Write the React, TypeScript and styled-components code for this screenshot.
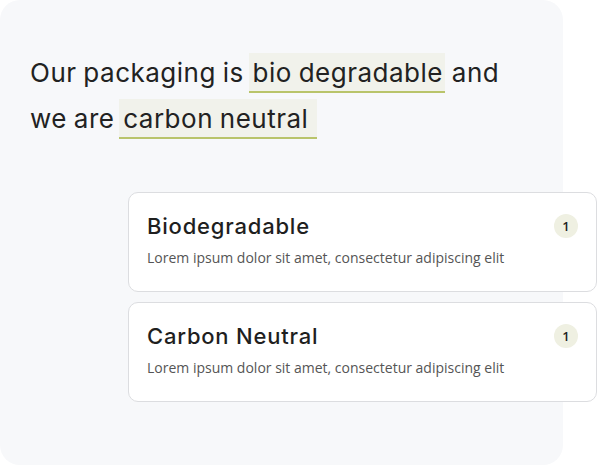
import styled, { createGlobalStyle } from "styled-components";

const Global = createGlobalStyle`
  body {
    margin: 0;
    background: #ffffff;
  }
`

const Panel = styled.div`
  width: 563px;
  height: 465px;
  box-sizing: border-box;
  background: #f7f8fa;
  border-radius: 20px;
  padding: 50px 0 0 30px;
`

const Headline = styled.p`
  margin: 0;
  font-family: "Inter", sans-serif;
  font-size: 26px;
  letter-spacing: 0.5px;
  word-spacing: -1px;
  line-height: 46px;
  color: #222222;
`

const Mark = styled.span`
  background: #f1f2eb;
  border-bottom: 2px solid #b9c46a;
  margin-left: -2px;
  padding: 4px 2px 3px 4px;
`

const Cards = styled.div`
  display: flex;
  flex-direction: column;
  gap: 10px;
  width: 469px;
  margin: 50px 0 0 98px;
`

const Card = styled.div`
  display: flex;
  align-items: flex-start;
  justify-content: space-between;
  background: #ffffff;
  border: 1px solid #dcdde0;
  border-radius: 10px;
  padding: 18px 18px 23px 18px;
`

const Title = styled.h3`
  margin: 0 0 7px;
  font-family: "Inter", sans-serif;
  font-weight: 500;
  font-size: 22px;
  letter-spacing: 0.8px;
  line-height: 30px;
  color: #1f1f1f;
`

const Desc = styled.p`
  margin: 0;
  font-family: "Open Sans", sans-serif;
  font-size: 14px;
  line-height: 20px;
  color: #555555;
`

const Badge = styled.span`
  display: flex;
  align-items: center;
  justify-content: center;
  flex-shrink: 0;
  width: 24px;
  height: 24px;
  margin-top: 3px;
  border-radius: 50%;
  background: #eff0e2;
  font-family: "Open Sans", sans-serif;
  font-weight: 600;
  font-size: 13px;
  color: #222222;
`

const items = [
  { title: "Biodegradable", count: 1 },
  { title: "Carbon Neutral", count: 1 },
]

export default function App() {
  return (
    <>
      <Global />
      <Panel>
        <Headline>
          Our packaging is <Mark>bio degradable</Mark> and
          <br />
          we are <Mark>{"carbon neutral\u00a0"}</Mark>
        </Headline>
        <Cards>
          {items.map(i => (
            <Card key={i.title}>
              <div>
                <Title>{i.title}</Title>
                <Desc>Lorem ipsum dolor sit amet, consectetur adipiscing elit</Desc>
              </div>
              <Badge>{i.count}</Badge>
            </Card>
          ))}
        </Cards>
      </Panel>
    </>
  )
}
